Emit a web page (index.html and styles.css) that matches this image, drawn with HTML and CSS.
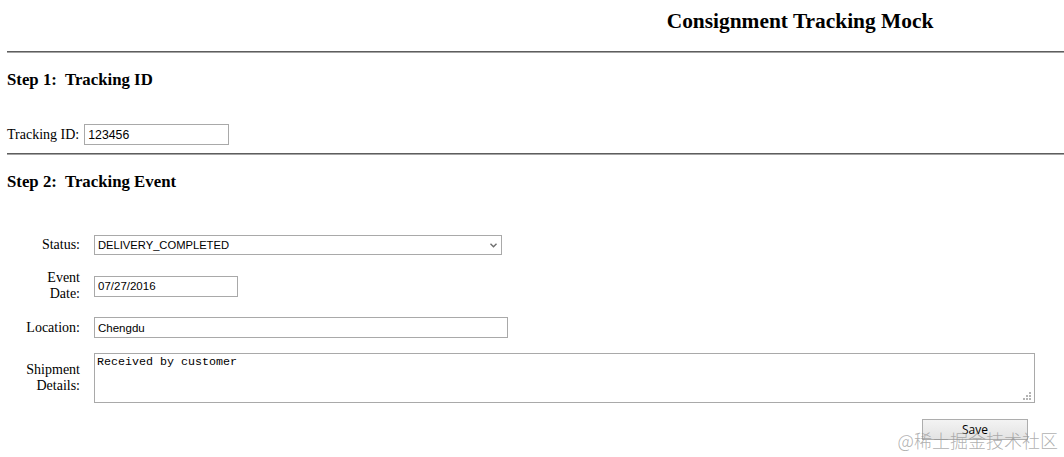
FILE: index.html
```html
<!DOCTYPE html>
<html lang="en">
<head>
<meta charset="utf-8">
<title>Consignment Tracking Mock</title>
<link rel="stylesheet" href="styles.css">
</head>
<body>
  <header class="page-header">
    <h1 class="page-title">Consignment Tracking Mock</h1>
  </header>
  <hr class="rule">
  <section class="step">
    <h2 class="step-title">Step 1:&nbsp; Tracking ID</h2>
    <div class="id-row">
      <label class="id-label" for="tid">Tracking ID:</label>
      <input class="field field-id" id="tid" type="text" value="123456">
    </div>
  </section>
  <hr class="rule">
  <section class="step">
    <h2 class="step-title">Step 2:&nbsp; Tracking Event</h2>
    <div class="event-form">
      <label class="form-label" for="status">Status:</label>
      <div class="select-wrap">
        <select class="field field-select" id="status">
          <option>DELIVERY_COMPLETED</option>
        </select>
        <svg class="select-arrow" width="7" height="5" viewBox="0 0 7 5" aria-hidden="true">
          <path d="M0.5 0.8 L3.5 3.8 L6.5 0.8" fill="none" stroke="#6e6e6e" stroke-width="1.4"/>
        </svg>
      </div>

      <label class="form-label" for="edate">Event Date:</label>
      <div class="cell"><input class="field field-date" id="edate" type="text" value="07/27/2016"></div>

      <label class="form-label" for="loc">Location:</label>
      <div class="cell"><input class="field field-loc" id="loc" type="text" value="Chengdu"></div>

      <label class="form-label" for="details">Shipment Details:</label>
      <div class="textarea-wrap">
        <textarea class="field field-text" id="details">Received by customer</textarea>
        <svg class="grip" width="9" height="9" viewBox="0 0 9 9" aria-hidden="true">
          <rect x="6" y="0" width="2" height="2" fill="#b4b4b4"/>
          <rect x="3" y="3" width="2" height="2" fill="#b4b4b4"/>
          <rect x="6" y="3" width="2" height="2" fill="#b4b4b4"/>
          <rect x="0" y="6" width="2" height="2" fill="#b4b4b4"/>
          <rect x="3" y="6" width="2" height="2" fill="#b4b4b4"/>
          <rect x="6" y="6" width="2" height="2" fill="#b4b4b4"/>
        </svg>
      </div>

      <div class="actions">
        <button class="save-btn" type="button">Save</button>
      </div>
    </div>
  </section>
  <div class="watermark">@稀土掘金技术社区</div>
</body>
</html>
```
FILE: styles.css
```css
html, body {
  height: 100%;
}
body {
  margin: 0;
  padding: 0 0 0 7px;
  font-family: "Liberation Serif", "Times New Roman", serif;
  font-size: 14px;
  color: #000;
  background: #fff;
  overflow: hidden;
}

.page-header {
  padding-left: 529px;
}
.page-title {
  margin: 9px 0 18px;
  font-size: 21.4px;
  line-height: 24px;
  font-weight: bold;
  text-align: center;
}

.rule {
  margin: 0;
  height: 0;
  border: none;
  border-top: 1px solid #5e5e5e;
  border-bottom: 1px solid #a4a4a4;
}

.step-title {
  margin: 17px 0 0;
  font-size: 16.8px;
  line-height: 19px;
  font-weight: bold;
}

.id-row {
  display: flex;
  align-items: baseline;
  gap: 5px;
  margin: 35px 0 8px;
  line-height: 16px;
}

.field {
  box-sizing: border-box;
  border: 1px solid #a9a9a9;
  border-radius: 0;
  background: #fff;
  color: #000;
  font-family: "Liberation Sans", Arial, sans-serif;
  font-size: 11.5px;
  margin: 0;
  outline: none;
}
input.field {
  height: 21px;
  padding: 0 3px;
}
.field-id { width: 145px; font-size: 12.3px; }
.field-date { width: 144px; }
.field-loc { width: 414px; }

.event-form {
  display: grid;
  grid-template-columns: 58px 1fr;
  column-gap: 14px;
  row-gap: 15px;
  margin-top: 44px;
  padding-left: 15px;
  align-items: center;
}
.form-label {
  text-align: right;
  line-height: 16px;
}
.cell {
  display: flex;
}

.select-wrap {
  position: relative;
  width: 408px;
  height: 20px;
}
.field-select {
  appearance: none;
  -webkit-appearance: none;
  width: 408px;
  height: 20px;
  padding: 0 20px 0 3px;
  font-size: 11.2px;
}
.select-arrow {
  position: absolute;
  left: 396px;
  top: 8px;
}

.textarea-wrap {
  position: relative;
  width: 941px;
  height: 50px;
}
.field-text {
  display: block;
  width: 941px;
  height: 50px;
  padding: 2px 2px;
  resize: none;
  font-family: "Liberation Mono", "Courier New", monospace;
  font-size: 11.67px;
  line-height: 13px;
}
.grip {
  position: absolute;
  right: 3px;
  bottom: 2px;
}

.actions {
  grid-column: 2;
  display: flex;
  justify-content: flex-end;
  padding-right: 36px;
  margin-top: 1px;
}
.save-btn {
  box-sizing: border-box;
  width: 106px;
  height: 21px;
  border: 1px solid #adadad;
  border-radius: 0;
  background: linear-gradient(#f3f3f3, #e3e3e3);
  color: #000;
  font-family: "Open Sans", "Liberation Sans", sans-serif;
  font-size: 12px;
  padding: 0;
}

.watermark {
  position: absolute;
  right: 6px;
  top: 428px;
  font-family: "Noto Sans CJK SC", sans-serif;
  font-weight: 300;
  font-size: 18px;
  line-height: 24px;
  color: rgba(150, 150, 150, 0.75);
  white-space: nowrap;
}
```
